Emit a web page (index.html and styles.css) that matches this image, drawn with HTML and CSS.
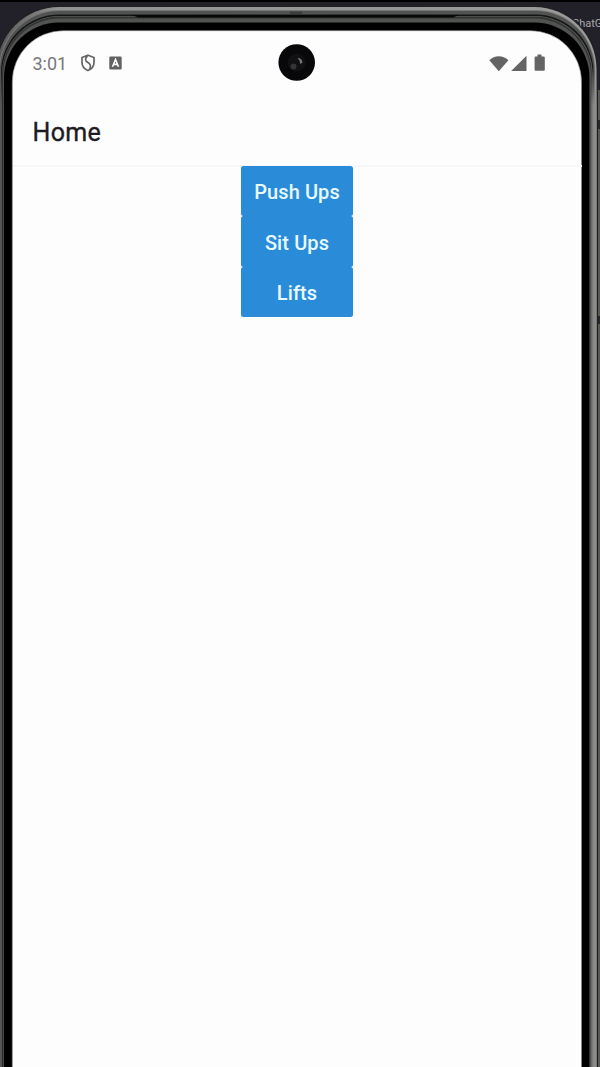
FILE: index.html
```
<!DOCTYPE html>
<html lang="en">
<head>
<meta charset="utf-8">
<title>Home</title>
<link rel="stylesheet" href="styles.css">
</head>
<body>
<div class="stage">
  <span class="desktop-label">ChatG</span>
  <svg class="bezel" width="600" height="1067" viewBox="0 0 600 1067">
    <defs>
      <linearGradient id="metal" x1="0" x2="1" y1="0" y2="0">
        <stop offset="0" stop-color="#555"/><stop offset=".1" stop-color="#929292"/>
        <stop offset="1" stop-color="#9a9a9a"/>
      </linearGradient>
      <linearGradient id="side" x1="0" x2="1" y1="0" y2="0">
        <stop offset="0" stop-color="#222"/><stop offset=".3" stop-color="#666"/>
        <stop offset=".55" stop-color="#858585"/><stop offset="1" stop-color="#929292"/>
      </linearGradient>
      <linearGradient id="fade" x1="0" x2="0" y1="0" y2="1">
        <stop offset="0" stop-color="#000"/><stop offset=".04" stop-color="#fff"/>
      </linearGradient>
      <mask id="lower"><rect y="65" width="600" height="1002" fill="url(#fade)"/></mask>
    </defs>
    <path d="M597 90h3v977h-3z" fill="#575753"/>
    <path d="M597.5 120h2.500v9h-2.500zM597.500 316h2.500v8h-2.500z" fill="#272727"/>
    <rect x="-4" y="6" width="602" height="1200" rx="63" fill="#202020"/>
    <rect x="-3" y="7" width="599.500" height="1200" rx="62" fill="url(#metal)"/>
    <rect x="-1" y="10" width="596" height="1200" rx="60" fill="#777"/>
    <rect x="0" y="11" width="594.500" height="1200" rx="59" fill="#505352"/>
    <rect x="1" y="14.500" width="592.500" height="1200" rx="58" fill="#151515"/>
    <rect x="2" y="16" width="590.500" height="1200" rx="58" fill="#666"/>
    <rect x="2" y="16.500" width="590" height="1200" rx="58" fill="#323432"/>
    <rect x="3" y="18.500" width="588" height="1200" rx="57" fill="#505350"/>
    <rect x="4" y="22.500" width="585.500" height="1200" rx="55" fill="#000"/>
    <g mask="url(#lower)">
      <path d="M589 65h7.500v1002H589z" fill="url(#side)"/>
      <path d="M0 65h2v1002H0z" fill="#555"/>
      <path d="M2 65h1v1002H2z" fill="#2b2b2b"/>
      <path d="M3 65h1v1002H3z" fill="#444"/>
    </g>
    <path d="M132 15h327l-6 2.500H138z" fill="#080808"/>
    <path d="M290 11.500h12v2.500h-12z" fill="#3b3e3d"/>
    <rect x="12.300" y="30.700" width="569.200" height="1200" rx="51" fill="#fefdfe" stroke="#8b8b8b" stroke-width=".6"/>
  </svg>
  <main class="screen">
    <div class="status">
      <div class="status-left">
        <span class="clock">3:01</span>
        <svg class="shield" width="16" height="18" viewBox="0 0 16 18">
          <path d="M8 1.200 14 3.500v5c0 3.700-2.400 6.600-6 8-3.600-1.400-6-4.300-6-8v-5z"/>
          <path d="M7.500 2C4.900 4.200 5 6.800 7.700 8.300c3 1.700 3.600 4.200 1.700 7"/>
        </svg>
        <svg width="13" height="14" viewBox="0 0 13 14">
          <rect x=".3" y=".5" width="12.400" height="13" rx="1.300" fill="#626262"/>
          <path d="M3.500 10.800 6.500 3.500l3 7.300M4.500 8.400h4" fill="none" stroke="#fff" stroke-width="1.600"/>
        </svg>
      </div>
      <div class="status-right">
        <svg width="20" height="17" viewBox="0 0 20 17"><path d="M.3 5.200C5.600-.1 14.100-.1 19.400 5.200L9.800 16.200z"/></svg>
        <svg width="16" height="17" viewBox="0 0 16 17"><path d="M.2 16 15.500.8V16z"/></svg>
        <svg width="12" height="18" viewBox="0 0 12 18"><path d="M3.500.6h4v1.800h2.300q1 0 1 1v12.400q0 1-1 1H1.600q-1 0-1-1V3.400q0-1 1-1h1.900z"/></svg>
      </div>
    </div>
    <header class="header"><h1>Home</h1></header>
    <div class="actions">
      <button>Push Ups</button>
      <button>Sit Ups</button>
      <button>Lifts</button>
    </div>
  </main>
  <svg class="camera" width="38" height="38" viewBox="0 0 38 38">
    <circle cx="18.700" cy="18.500" r="18.300" fill="#08080a"/>
    <circle cx="18.700" cy="18.500" r="9" fill="#111113"/>
    <path d="M19.500 14q4.500 0 5 4.500l-2.500 1.500q0-4-2.500-6z" fill="#77777a"/>
    <circle cx="15.500" cy="22.500" r="3" fill="#343437"/>
  </svg>
</div>
</body>
</html>
```
FILE: styles.css
```
* { box-sizing: border-box; }
body { margin: 0; background: #222129; font-family: Roboto, sans-serif; }
.stage {
  position: relative;
  width: 600px;
  height: 1067px;
  overflow: hidden;
  border-top: 2px solid #000;
}
.desktop-label {
  position: absolute;
  left: 572px;
  top: 14px;
  font: 11px/15px Roboto, sans-serif;
  color: #aaa9ae;
  white-space: nowrap;
}
.bezel { position: absolute; left: 0; top: -2px; }
.camera { position: absolute; left: 278px; top: 42px; }
.screen {
  position: relative;
  margin: 29px 18.500px 0 12.500px;
}
.status {
  display: flex;
  justify-content: space-between;
  height: 66px;
  padding: 0 35.500px 0 20px;
}
.status-left, .status-right { display: flex; align-items: center; height: 64px; }
.clock { width: 47px; font-size: 18px; color: #77777a; }
.status-left svg + svg { margin-left: 13px; }
.shield { fill: none; stroke: #646464; stroke-width: 1.700; }
.status-right { gap: 2px; }
.status-right svg { fill: #646464; }
.status-right svg:last-child { margin-left: 5px; }
.header {
  display: flex;
  align-items: center;
  height: 70px;
  padding: 3px 0 0 20px;
  border-bottom: 2px solid #f7f7f9;
}
.header h1 {
  margin: 0;
  font-size: 25px;
  line-height: 30px;
  font-weight: 400;
  letter-spacing: .3px;
  color: #1c1b1f;
  -webkit-text-stroke: .35px #1c1b1f;
}
.actions {
  display: flex;
  flex-direction: column;
  width: 112px;
  margin: -1px auto 0;
}
.actions button {
  height: 50.400px;
  padding: 2px 0 0;
  border: 0;
  border-radius: 2.500px;
  background: #2a8cd8;
  color: #e7faff;
  font: 500 20px/24px Roboto, sans-serif;
  letter-spacing: .1px;
}
```
